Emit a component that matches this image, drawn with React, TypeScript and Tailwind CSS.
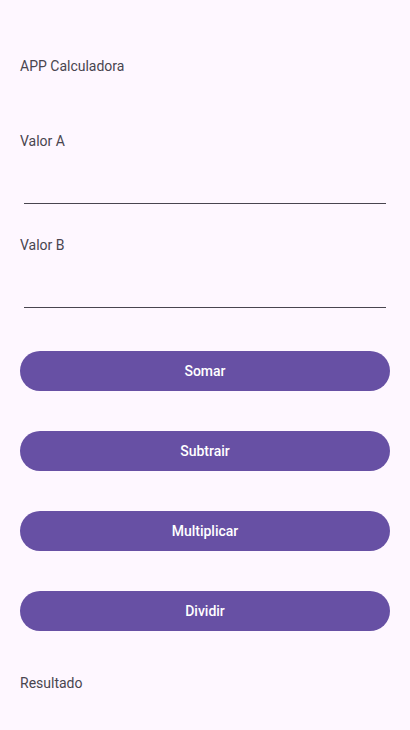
const buttons = ["Somar", "Subtrair", "Multiplicar", "Dividir"];

export default function App() {
  return (
    <div
      className="min-h-[730px] w-full bg-[#fef7ff] px-5 pt-[56px] text-sm text-[#49454f]"
      style={{ fontFamily: "Roboto, 'Liberation Sans', sans-serif" }}
    >
      <p className="h-5 leading-5">APP Calculadora</p>

      <p className="mt-[55px] h-5 leading-5">Valor A</p>
      <div className="mx-1 h-[53px] border-b border-[#49454f]" />

      <p className="mt-[31px] h-5 leading-5">Valor B</p>
      <div className="mx-1 h-[53px] border-b border-[#49454f]" />

      <div className="mt-[43px] flex flex-col gap-10">
        {buttons.map((b) => (
          <button
            key={b}
            className="h-10 w-full rounded-full bg-[#6750a4] text-sm font-medium text-white"
          >
            {b}
          </button>
        ))}
      </div>

      <p className="mt-[42px] h-5 leading-5">Resultado</p>
    </div>
  );
}
